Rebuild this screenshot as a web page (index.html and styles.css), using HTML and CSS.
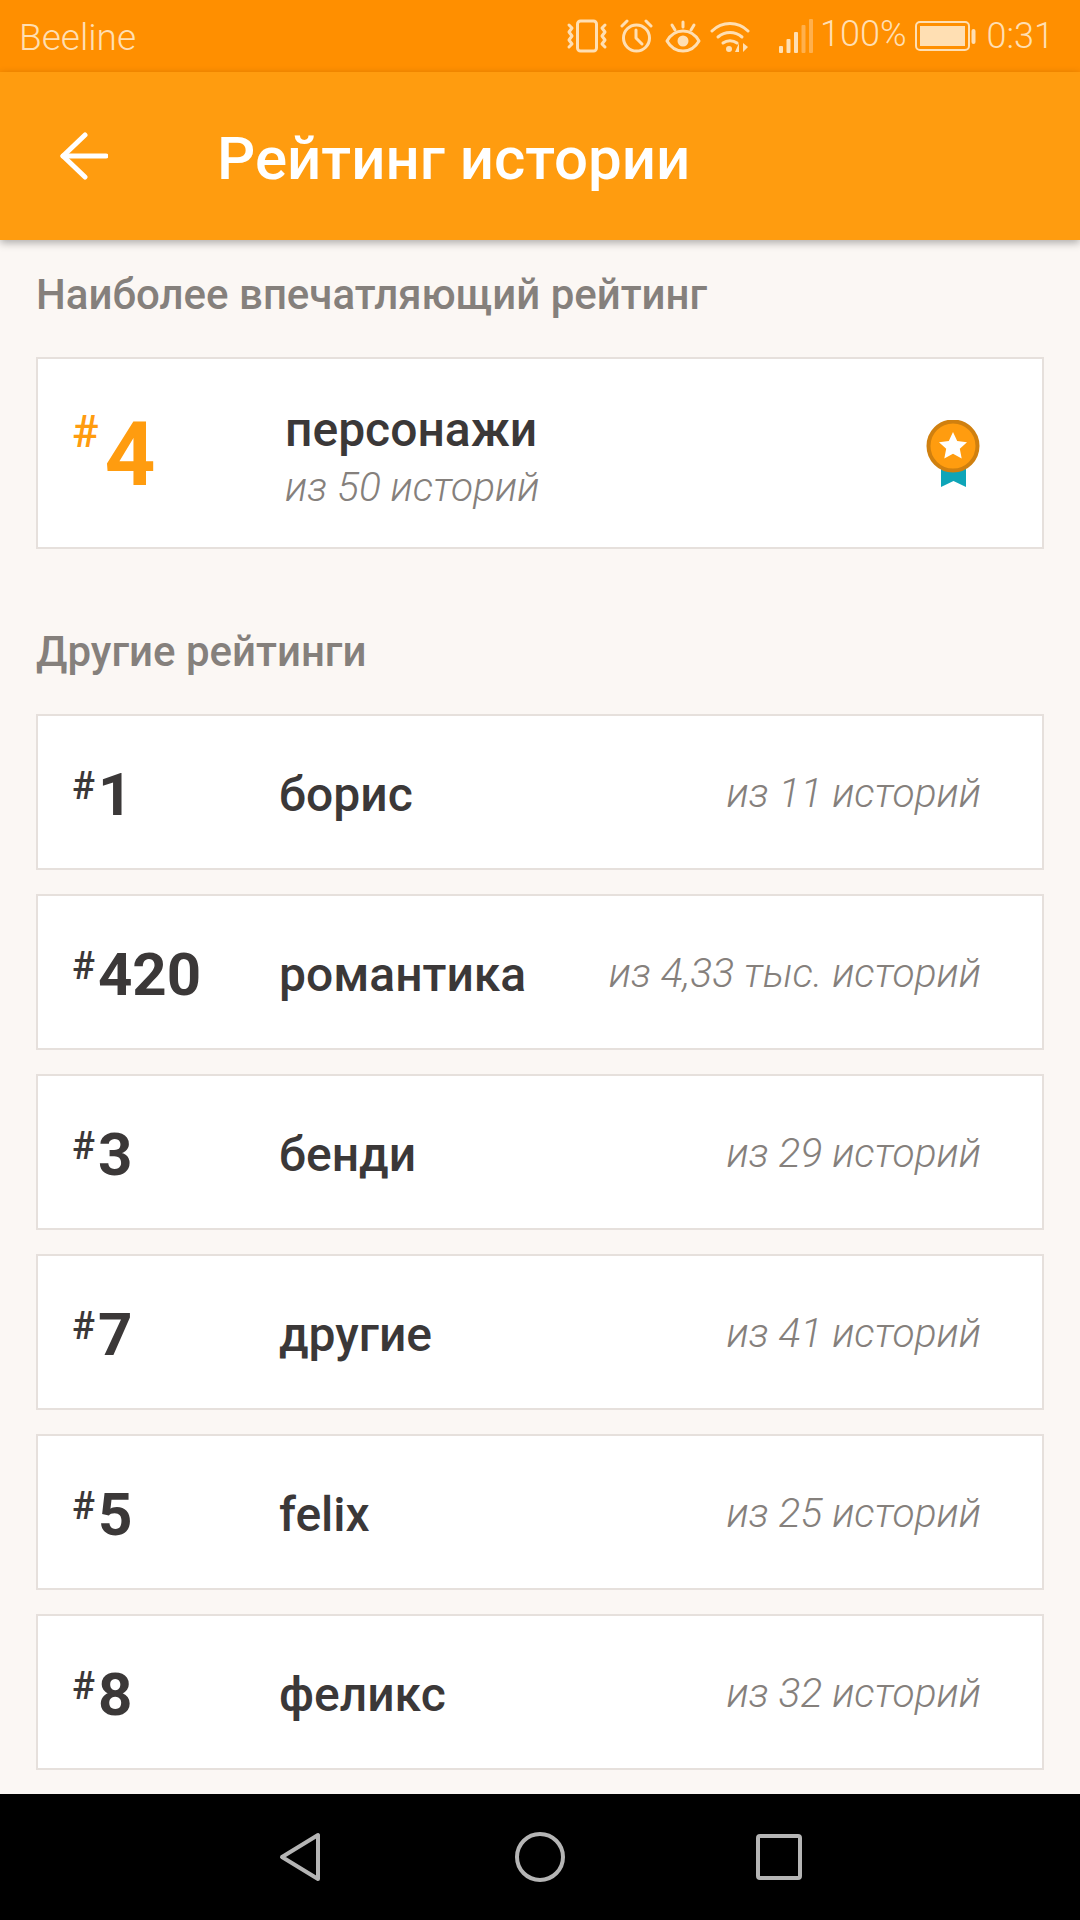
FILE: index.html
```html
<!DOCTYPE html>
<html>
<head>
  <title>Рейтинг истории</title>
  <meta charset="utf-8">
  <link rel="stylesheet" href="styles.css">
</head>
<body>

  <div class="status-bar">
    <span class="carrier">Beeline</span>
    <div class="status-right">
      <svg class="ico-vibrate" width="42" height="34" viewBox="0 0 42 34" fill="none" stroke="#ffdfb3" stroke-width="3" stroke-linecap="round" stroke-linejoin="round">
        <rect x="11.5" y="2" width="19" height="30" rx="3"/>
        <path d="M3 6l3 3-3 4 3 4-3 4 3 4-3 3"/>
        <path d="M39 6l-3 3 3 4-3 4 3 4-3 4 3 3"/>
      </svg>
      <svg class="ico-alarm" width="33" height="34" viewBox="0 0 33 34" fill="none" stroke="#ffdfb3" stroke-width="3" stroke-linecap="round" stroke-linejoin="round">
        <circle cx="16.500" cy="19" r="13"/>
        <path d="M16 11v8l6 6"/>
        <path d="M2 7l5-5M31 7l-5-5"/>
      </svg>
      <svg class="ico-eye" width="36" height="33" viewBox="0 0 36 33" fill="none" stroke="#ffdfb3" stroke-width="3" stroke-linecap="round" stroke-linejoin="round">
        <path d="M2 21c4-7 9-10 16-10s12 3 16 10c-4 7-9 10-16 10S6 28 2 21z"/>
        <circle cx="18" cy="21" r="5.500" fill="#ffdfb3" stroke="none"/>
        <path d="M18 2v5M7 5l3 5M29 5l-3 5"/>
      </svg>
      <svg class="ico-wifi" width="40" height="33" viewBox="0 0 40 33" fill="none" stroke="#ffdfb3" stroke-width="3" stroke-linecap="round">
        <path d="M2 11c10-10 26-10 36 0"/>
        <path d="M8 17c7-6 17-6 24 0"/>
        <path d="M13 23c4-3 10-3 14 0"/>
        <circle cx="19" cy="29" r="3" fill="#ffdfb3" stroke="none"/>
        <path d="M29 32v-9l-4 9zM33 23v9l5-5z" fill="#ffdfb3" stroke="none"/>
      </svg>
      <svg class="ico-signal" width="34" height="34" viewBox="0 0 34 34">
        <rect x="0" y="27" width="4" height="7" rx="1" fill="#ffdfb3"/>
        <rect x="7.500" y="20" width="4" height="14" rx="1" fill="#ffdfb3"/>
        <rect x="15" y="13" width="4" height="21" rx="1" fill="#ffdfb3"/>
        <rect x="22.500" y="6" width="4" height="28" rx="1" fill="#ffb04d"/>
        <rect x="30" y="0" width="4" height="34" rx="1" fill="#ffb04d"/>
      </svg>
      <span class="status-text pct">100%</span>
      <svg class="ico-battery" width="61" height="30" viewBox="0 0 61 30" fill="none">
        <rect x="1" y="1" width="53" height="28" rx="4" stroke="#ffdfb3" stroke-width="2"/>
        <rect x="5" y="5" width="45" height="20" fill="#ffdfb3"/>
        <rect x="56.500" y="8" width="4" height="15" rx="2" fill="#ffdfb3"/>
      </svg>
      <span class="status-text time">0:31</span>
    </div>
  </div>

  <div class="app-bar">
    <svg class="back" width="48" height="48" viewBox="0 0 48 48" fill="none" stroke="#fff" stroke-width="5" stroke-linecap="round" stroke-linejoin="round">
      <path d="M46 24H3"/>
      <path d="M25 3L3 24l22 21"/>
    </svg>
    <h1>Рейтинг истории</h1>
  </div>

  <div class="content">
    <h2 class="section-title">Наиболее впечатляющий рейтинг</h2>

    <div class="card top-card">
      <div class="rank top-rank"><span class="hash">#</span><span class="num">4</span></div>
      <div class="top-info">
        <div class="name">персонажи</div>
        <div class="of">из 50 историй</div>
      </div>
      <svg class="medal" width="54" height="70" viewBox="0 0 54 70">
        <path d="M15 40h25v27l-12.500-6L15 67z" fill="#0ea5b8"/>
        <circle cx="27" cy="26" r="24.500" fill="#ff9c0f" stroke="#d0800f" stroke-width="4"/>
        <path d="M27 12l4.200 9 9.800 1.200-7.200 6.600 1.900 9.700-8.700-4.800-8.700 4.800 1.900-9.700-7.200-6.600 9.800-1.200z" fill="#fff"/>
      </svg>
    </div>

    <h2 class="section-title other-title">Другие рейтинги</h2>

    <div class="list">
      <div class="card row">
        <div class="rank"><span class="hash">#</span><span class="num">1</span></div>
        <div class="name">борис</div>
        <div class="of">из 11 историй</div>
      </div>
      <div class="card row">
        <div class="rank"><span class="hash">#</span><span class="num">420</span></div>
        <div class="name">романтика</div>
        <div class="of">из 4,33 тыс. историй</div>
      </div>
      <div class="card row">
        <div class="rank"><span class="hash">#</span><span class="num">3</span></div>
        <div class="name">бенди</div>
        <div class="of">из 29 историй</div>
      </div>
      <div class="card row">
        <div class="rank"><span class="hash">#</span><span class="num">7</span></div>
        <div class="name">другие</div>
        <div class="of">из 41 историй</div>
      </div>
      <div class="card row">
        <div class="rank"><span class="hash">#</span><span class="num">5</span></div>
        <div class="name">felix</div>
        <div class="of">из 25 историй</div>
      </div>
      <div class="card row">
        <div class="rank"><span class="hash">#</span><span class="num">8</span></div>
        <div class="name">феликс</div>
        <div class="of">из 32 историй</div>
      </div>
    </div>
  </div>

  <div class="nav-bar">
    <svg width="42" height="50" viewBox="0 0 42 50" fill="none" stroke="#b5b5b5" stroke-width="4" stroke-linejoin="round">
      <path d="M39 3v44L3 25z"/>
    </svg>
    <svg width="50" height="50" viewBox="0 0 50 50" fill="none" stroke="#b5b5b5" stroke-width="4">
      <circle cx="25" cy="25" r="23"/>
    </svg>
    <svg class="nav-square" width="46" height="46" viewBox="0 0 46 46" fill="none" stroke="#b5b5b5" stroke-width="4" stroke-linejoin="round">
      <rect x="2" y="2" width="42" height="42" rx="2"/>
    </svg>
  </div>

</body>
</html>
```

FILE: styles.css
```css
* {
  box-sizing: border-box;
}

html, body {
  margin: 0;
  height: 100%;
}

body {
  width: 1080px;
  height: 1920px;
  display: flex;
  flex-direction: column;
  font-family: Roboto, sans-serif;
  background-color: #fbf7f4;
  color: #3b3838;
  overflow: hidden;
}

.status-bar {
  height: 72px;
  flex: none;
  display: flex;
  align-items: center;
  justify-content: space-between;
  padding: 0 26px 0 19px;
  background-color: #ff8f00;
  color: #ffdfb3;
}

.carrier {
  font-size: 37px;
  font-weight: 300;
  margin-top: 2px;
}

.status-right {
  display: flex;
  align-items: center;
}

.ico-alarm {
  margin-left: 12px;
}

.ico-eye {
  margin-left: 12px;
}

.ico-wifi {
  margin-left: 9px;
}

.ico-signal {
  margin-left: 29px;
}

.status-text {
  font-size: 36px;
  font-weight: 300;
}

.pct {
  margin-left: 7px;
  margin-top: -4px;
}

.ico-battery {
  margin-left: 8px;
}

.time {
  margin-left: 11px;
}

.app-bar {
  height: 168px;
  flex: none;
  display: flex;
  align-items: center;
  padding-left: 60px;
  background-color: #ff9c0f;
  box-shadow: 0 3px 8px rgba(0, 0, 0, 0.3);
  position: relative;
}

.app-bar h1 {
  margin: 5px 0 0 109px;
  font-size: 60px;
  font-weight: 500;
  color: #fff;
}

.content {
  flex: 1;
  padding: 0 36px;
}

.section-title {
  margin: 32px 0 0;
  font-size: 42px;
  line-height: 46px;
  font-weight: 500;
  color: #85807c;
}

.other-title {
  margin-top: 80px;
}

.card {
  background-color: #fff;
  border: 2px solid #e6e0dc;
}

.top-card {
  height: 192px;
  margin-top: 39px;
  display: flex;
  align-items: center;
  padding: 0 62px 0 34px;
}

.list {
  display: flex;
  flex-direction: column;
  gap: 24px;
  margin-top: 39px;
}

.row {
  height: 156px;
  display: flex;
  align-items: center;
  padding: 5px 61px 0 34px;
}

.rank {
  display: flex;
  align-items: flex-start;
  font-weight: 700;
  flex: none;
  width: 207px;
}

.hash {
  font-size: 38px;
  line-height: 48px;
  font-weight: 500;
  margin-top: 2px;
}

.num {
  font-size: 60px;
  line-height: 70px;
  margin-left: 3px;
}

.name {
  font-size: 48px;
  font-weight: 500;
  color: #3b3838;
}

.of {
  margin-left: auto;
  margin-bottom: 3px;
  font-size: 40.7px;
  font-weight: 300;
  font-style: italic;
  color: #85807c;
}

.top-rank {
  width: 213px;
  color: #ff9c0f;
  padding-top: 4px;
}

.top-rank .hash {
  font-size: 44px;
  margin-top: -12px;
}

.top-rank .num {
  font-size: 89px;
  margin-left: 6px;
}

.top-info {
  flex: 1;
  padding-top: 5px;
}

.top-info .name {
  line-height: 56px;
}

.top-info .of {
  margin: 6px 0 0;
  line-height: 46px;
  text-align: left;
}

.medal {
  flex: none;
  margin-top: 4px;
}

.nav-bar {
  height: 126px;
  flex: none;
  display: flex;
  align-items: center;
  background-color: #000;
  padding-left: 279px;
  gap: 194px;
}

.nav-square {
  margin-left: -3px;
}
```
